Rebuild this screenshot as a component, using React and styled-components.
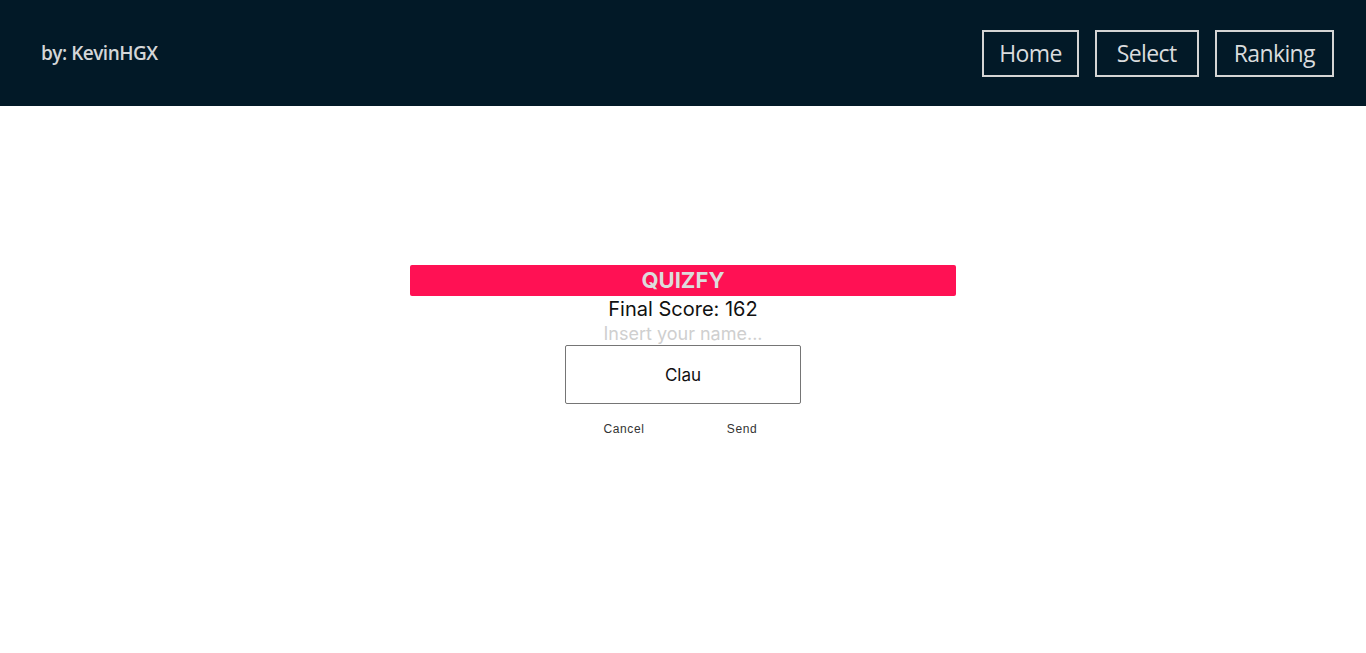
import React, { useState } from "react";
import styled, { createGlobalStyle } from "styled-components";

const Global = createGlobalStyle`
  html, body { margin: 0; padding: 0; background: #ffffff; }
  body { font-family: "Inter", "Liberation Sans", sans-serif; }
  * { box-sizing: border-box; }
`;

const Header = styled.header`
  height: 106px;
  background: #021927;
  display: flex;
  align-items: center;
  justify-content: space-between;
  padding: 0 32px 0 41px;
  font-family: "Open Sans", "DejaVu Sans", sans-serif;
`;

const Author = styled.span`
  color: #d4d6d8;
  font-size: 19px;
  font-weight: 600;
  letter-spacing: -0.5px;
`;

const Nav = styled.nav`
  display: flex;
  gap: 16px;
`;

const NavButton = styled.button`
  height: 47px;
  padding: 0 ${(p) => p.$pad}px;
  background: transparent;
  border: 2px solid #d4d4d4;
  color: #dadcde;
  font-family: "Open Sans", "DejaVu Sans", sans-serif;
  font-size: 23px;
  font-weight: 500;
  letter-spacing: -0.6px;
  cursor: pointer;
`;

const Main = styled.main`
  display: flex;
  justify-content: center;
  padding-top: 159px;
`;

const Card = styled.div`
  width: 546px;
  display: flex;
  flex-direction: column;
  align-items: center;
`;

const Title = styled.h1`
  margin: 0;
  width: 100%;
  height: 31px;
  background: #ff1154;
  border-radius: 2px;
  color: #dcdcdc;
  font-size: 22px;
  font-weight: 700;
  line-height: 31px;
  text-align: center;
`;

const Score = styled.p`
  margin: 0;
  height: 27px;
  line-height: 27px;
  color: #111;
  font-size: 20px;
`;

const Field = styled.div`
  position: relative;
  margin-top: 22px;
  display: flex;
  flex-direction: column;
  align-items: center;
`;

const Placeholder = styled.label`
  position: absolute;
  left: -40px;
  right: -40px;
  top: -22px;
  text-align: center;
  color: #cfcfcf;
  font-size: 18px;
  line-height: 22px;
`;

const NameInput = styled.input`
  width: 236px;
  height: 59px;
  border: 1px solid #757575;
  border-radius: 2px;
  text-align: center;
  font-family: inherit;
  font-size: 17px;
  color: #111;
  outline: none;
`;

const Actions = styled.div`
  display: flex;
  gap: 58px;
  margin-top: 18px;
`;

const ActionButton = styled.button`
  width: 60px;
  background: none;
  border: none;
  padding: 0;
  color: #333;
  font-family: "Liberation Sans", Arial, sans-serif;
  font-size: 12px;
  letter-spacing: 0.6px;
  cursor: pointer;
`;

export default function App() {
  const [name, setName] = useState("Clau");
  return (
    <>
      <Global />
      <Header>
        <Author>by: KevinHGX</Author>
        <Nav>
          <NavButton $pad={15}>Home</NavButton>
          <NavButton $pad={20}>Select</NavButton>
          <NavButton $pad={17}>Ranking</NavButton>
        </Nav>
      </Header>
      <Main>
        <Card>
          <Title>QUIZFY</Title>
          <Score>Final Score: 162</Score>
          <Field>
            <Placeholder>Insert your name...</Placeholder>
            <NameInput value={name} onChange={(e) => setName(e.target.value)} />
          </Field>
          <Actions>
            <ActionButton>Cancel</ActionButton>
            <ActionButton>Send</ActionButton>
          </Actions>
        </Card>
      </Main>
    </>
  );
}
